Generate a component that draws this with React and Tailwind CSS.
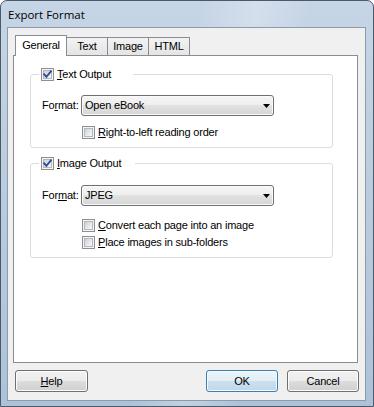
import React from 'react';

// Vista-style checkbox: grey frame, gradient well, blue tick when checked
const CheckBox = ({ checked }) => (
  <span className="relative flex h-[13px] w-[13px] shrink-0 items-center justify-center border border-[#8f8f8f] bg-[#f4f4f4]">
    <span className="h-[9px] w-[9px] border border-[#b3b8be] bg-[linear-gradient(135deg,#cbd0d6_0%,#e9ebee_60%,#f9f9f9_100%)]" />
    {checked && (
      <svg className="absolute left-[0px] top-[0px]" width="11" height="11" viewBox="0 0 11 11">
        <path d="M2.2 5.3 L4.4 7.8 L8.9 2.4" fill="none" stroke="#2c4d92" strokeWidth="1.9" strokeLinecap="square" />
      </svg>
    )}
  </span>
);

const Combo = ({ value }) => (
  <div className="flex h-[21px] w-[193px] items-center justify-between rounded-[3px] border border-[#707070] bg-[linear-gradient(to_bottom,#f5f5f5_0%,#eeeeee_50%,#e2e2e2_50%,#d5d5d5_100%)] pl-[3px] pr-[3px] shadow-[inset_0_0_0_1px_#fafafa]">
    <span>{value}</span>
    <svg width="7" height="4" viewBox="0 0 7 4">
      <path d="M0 0H7L3.5 4Z" fill="#000" />
    </svg>
  </div>
);

const Button = ({ children, primary, className = '' }) => (
  <button
    className={
      'flex h-[22px] items-center justify-center rounded-[3px] border ' +
      (primary
        ? 'border-[#3c7fb1] bg-[linear-gradient(to_bottom,#edf5fb_0%,#e1edf6_50%,#cde0ef_50%,#bfd6ea_100%)] shadow-[inset_0_0_0_1px_#f4f9fd] '
        : 'border-[#707070] bg-[linear-gradient(to_bottom,#f2f2f2_0%,#ebebeb_50%,#dddddd_50%,#cfcfcf_100%)] shadow-[inset_0_0_0_1px_#fcfcfc] ') +
      className
    }
  >
    {children}
  </button>
);

const Row = ({ children, className = '' }) => (
  <label className={'flex items-center gap-[2px] ' + className}>{children}</label>
);

export default function App() {
  return (
    <div className="h-[407px] w-[374px] bg-white font-['Liberation_Sans',Arial,sans-serif] text-[11px] leading-[13px] tracking-[-0.2px] text-black">
      <div className="flex h-full w-full flex-col rounded-t-[7px] border border-[#4b5a6b] bg-[linear-gradient(100deg,rgba(255,255,255,0)_45%,rgba(255,255,255,0.25)_58%,rgba(255,255,255,0)_70%),linear-gradient(to_bottom,#c6d5e6_0%,#bccde0_40%,#adc2d8_100%)] pb-[5px] pl-[6px] pr-[7px]">
        {/* Title bar */}
        <div className="flex h-[26px] items-center pl-[1px] font-['Open_Sans',sans-serif] text-[11.5px] tracking-normal">
          Export Format
        </div>

        {/* Client area */}
        <div className="flex flex-1 flex-col border border-[#8c9bab] bg-[#f0f0f0] pl-[5px] pr-[7px] pt-[7px]">
          {/* Tabs */}
          <div className="ml-[2px] flex h-[20px] items-end">
            <div className="relative z-10 -mb-px flex h-[21px] w-[52px] items-center justify-center border border-b-0 border-[#898c95] bg-white pb-[1px]">
              General
            </div>
            {['Text', 'Image', 'HTML'].map((t) => (
              <div
                key={t}
                className="flex h-[18px] w-[41px] items-center justify-center border-r border-t border-[#898c95] bg-[linear-gradient(to_bottom,#f3f3f3,#e4e4e4)]"
              >
                {t}
              </div>
            ))}
          </div>

          {/* Tab panel */}
          <div className="flex h-[308px] flex-col border border-[#898c95] bg-white">
            <fieldset className="ml-[16px] mt-[12px] w-[303px] rounded-[3px] border border-[#d5dfe5] px-0 pb-[8px]">
              <legend className="ml-[8px] flex h-[13px] w-[94px] items-center gap-[3px] pl-[2px]">
                <CheckBox checked />
                <span>
                  <span className="underline">T</span>ext Output
                </span>
              </legend>
              <div className="mt-[14px] flex items-center pl-[11px]">
                <span className="w-[39px]">
                  Fo<span className="underline">r</span>mat:
                </span>
                <Combo value="Open eBook" />
              </div>
              <Row className="ml-[51px] mt-[10px]">
                <CheckBox />
                <span className="ml-[1px]">
                  <span className="underline">R</span>ight-to-left reading order
                </span>
              </Row>
            </fieldset>

            <fieldset className="ml-[16px] mt-[9px] w-[303px] rounded-[3px] border border-[#d5dfe5] px-0 pb-[8px]">
              <legend className="ml-[8px] flex h-[13px] w-[96px] items-center gap-[3px] pl-[2px]">
                <CheckBox checked />
                <span>
                  <span className="underline">I</span>mage Output
                </span>
              </legend>
              <div className="mt-[15px] flex items-center pl-[11px]">
                <span className="w-[39px]">
                  For<span className="underline">m</span>at:
                </span>
                <Combo value="JPEG" />
              </div>
              <Row className="ml-[51px] mt-[13px]">
                <CheckBox />
                <span className="ml-[1px]">
                  <span className="underline">C</span>onvert each page into an image
                </span>
              </Row>
              <Row className="ml-[51px] mt-[4px]">
                <CheckBox />
                <span className="ml-[1px]">
                  <span className="underline">P</span>lace images in sub-folders
                </span>
              </Row>
            </fieldset>
          </div>

          {/* Buttons */}
          <div className="-mr-px ml-[2px] mt-[7px] flex items-center justify-between">
            <Button className="w-[73px]">
              <span>
                <span className="underline">H</span>elp
              </span>
            </Button>
            <div className="flex gap-[9px]">
              <Button primary className="w-[72px]">
                OK
              </Button>
              <Button className="w-[72px]">Cancel</Button>
            </div>
          </div>
        </div>
      </div>
    </div>
  );
}
